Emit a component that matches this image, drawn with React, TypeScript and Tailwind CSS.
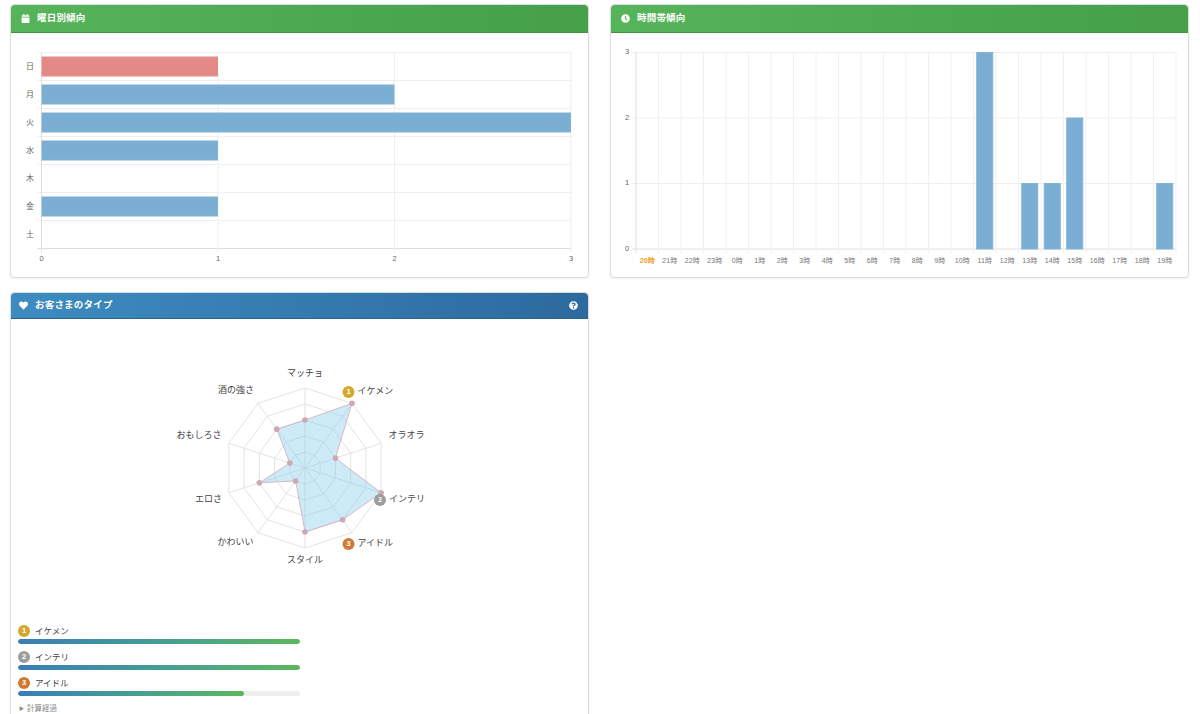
import { FaCalendar, FaClock, FaHeart, FaQuestionCircle } from "react-icons/fa";

const FONT = {
  fontFamily: '"Liberation Sans", "Noto Sans CJK JP", sans-serif',
};

const WEEKDAYS = [
  { label: "日", value: 1, sunday: true },
  { label: "月", value: 2 },
  { label: "火", value: 3 },
  { label: "水", value: 1 },
  { label: "木", value: 0 },
  { label: "金", value: 1 },
  { label: "土", value: 0 },
];

const HOURS = [20, 21, 22, 23, 0, 1, 2, 3, 4, 5, 6, 7, 8, 9, 10, 11, 12, 13, 14, 15, 16, 17, 18, 19];
const HOUR_COUNTS: Record<number, number> = { 11: 3, 13: 1, 14: 1, 15: 2, 19: 1 };

const RADAR = [
  { label: "マッチョ", value: 3 },
  { label: "イケメン", value: 5 },
  { label: "オラオラ", value: 2 },
  { label: "インテリ", value: 5 },
  { label: "アイドル", value: 4 },
  { label: "スタイル", value: 4 },
  { label: "かわいい", value: 1 },
  { label: "エロさ", value: 3 },
  { label: "おもしろさ", value: 1 },
  { label: "酒の強さ", value: 3 },
];

const RANK_COLORS = ["#d4a82a", "#9d9d9d", "#cf7a31"];

const RANKING = [
  { label: "イケメン", pct: 100 },
  { label: "インテリ", pct: 100 },
  { label: "アイドル", pct: 80 },
];

function Panel({
  title,
  icon,
  tone,
  right,
  children,
}: {
  title: string;
  icon: React.ReactNode;
  tone: "green" | "blue";
  right?: React.ReactNode;
  children: React.ReactNode;
}) {
  return (
    <div className="flex flex-col rounded-[4px] border border-[#dcdcdc] bg-white shadow-[0_1px_2px_rgba(0,0,0,0.06)]">
      <div
        className={
          tone === "green"
            ? "flex h-[28px] items-center gap-[7px] rounded-t-[4px] border-b border-[#3f963f] bg-gradient-to-r from-[#56b45a] to-[#45a049] px-[10px] text-white"
            : "flex h-[26px] items-center gap-[7px] rounded-t-[4px] border-b border-[#2a6393] bg-gradient-to-r from-[#3d8cc1] to-[#2d6a9e] px-[8px] text-white"
        }
      >
        <span className="flex w-[9px] items-center justify-center text-[9px]">{icon}</span>
        <span className="text-[9.5px] font-bold tracking-[0.2px]">{title}</span>
        {right && <span className="ml-auto flex items-center pr-[2px]">{right}</span>}
      </div>
      <div className="flex-1">{children}</div>
    </div>
  );
}

function WeekdayChart() {
  const left = 30.5;
  const right = 560;
  const top = 19.5;
  const rowH = 28;
  const unit = (right - left) / 3;
  const bottom = top + rowH * 7;

  return (
    <svg width="577" height="244" className="block" style={FONT}>
      {/* horizontal grid */}
      {Array.from({ length: 8 }).map((_, i) => (
        <line key={"h" + i} x1={left - 4} x2={right} y1={top + i * rowH} y2={top + i * rowH} stroke={i === 7 ? "#dedede" : "#efefef"} />
      ))}
      {/* vertical grid */}
      {[0, 1, 2, 3].map((v) => (
        <line key={"v" + v} x1={left + v * unit} x2={left + v * unit} y1={top} y2={bottom + 4} stroke={v === 0 ? "#dedede" : "#efefef"} />
      ))}
      {WEEKDAYS.map((d, i) => (
        <g key={d.label}>
          <text x={19} y={top + i * rowH + rowH / 2} fontSize="8" fill="#666" textAnchor="middle" dominantBaseline="middle">
            {d.label}
          </text>
          {d.value > 0 && (
            <rect
              x={left + 0.5}
              y={top + i * rowH + 4.5}
              width={d.value * unit - 1}
              height={19}
              fill={d.sunday ? "#e38a87" : "#7aafd3"}
              stroke={d.sunday ? "#e48e8b" : "#80b3d6"}
            />
          )}
        </g>
      ))}
      {[0, 1, 2, 3].map((v) => (
        <text key={"x" + v} x={left + v * unit} y={bottom + 11} fontSize="7.5" fill="#666" textAnchor="middle" dominantBaseline="middle">
          {v}
        </text>
      ))}
    </svg>
  );
}

function HourChart() {
  const left = 25;
  const right = 565;
  const top = 19.5;
  const bottom = 216;
  const unit = (bottom - top) / 3;
  const colW = (right - left) / 24;

  return (
    <svg width="577" height="244" className="block" style={FONT}>
      {[0, 1, 2, 3].map((v) => (
        <g key={"y" + v}>
          <line x1={left - 4} x2={right} y1={bottom - v * unit} y2={bottom - v * unit} stroke={v === 0 ? "#dedede" : "#efefef"} />
          <text x={16} y={bottom - v * unit} fontSize="7.5" fill="#666" textAnchor="middle" dominantBaseline="middle">
            {v}
          </text>
        </g>
      ))}
      {Array.from({ length: 25 }).map((_, i) => (
        <line key={"v" + i} x1={left + i * colW} x2={left + i * colW} y1={top} y2={bottom + 4} stroke={i === 0 ? "#dedede" : "#f0f0f0"} />
      ))}
      {HOURS.map((h, i) => {
        const count = HOUR_COUNTS[h] || 0;
        const cx = left + i * colW + colW / 2;
        return (
          <g key={h}>
            {count > 0 && (
              <rect x={cx - 8} y={bottom - count * unit} width={16} height={count * unit} fill="#7aafd3" stroke="#80b3d6" />
            )}
            <text
              x={cx}
              y={bottom + 12}
              fontSize="7"
              fill={i === 0 ? "#f0a01e" : "#777"}
              fontWeight={i === 0 ? "bold" : "normal"}
              textAnchor="middle"
              dominantBaseline="middle"
            >
              {h}時
            </text>
          </g>
        );
      })}
    </svg>
  );
}

function Badge({ rank, x, y }: { rank: number; x: number; y: number }) {
  return (
    <g>
      <circle cx={x} cy={y} r={6} fill={RANK_COLORS[rank - 1]} />
      <text x={x} y={y + 0.5} fontSize="7.5" fontWeight="bold" fill="#fff" textAnchor="middle" dominantBaseline="middle">
        {rank}
      </text>
    </g>
  );
}

function RadarChart() {
  const cx = 294;
  const cy = 149;
  const step = 16;
  const pt = (i: number, r: number) => {
    const a = (i * 36 * Math.PI) / 180;
    return [cx + r * Math.sin(a), cy - r * Math.cos(a)];
  };
  const ring = (r: number) =>
    RADAR.map((_, i) => pt(i, r).map((n) => n.toFixed(1)).join(",")).join(" ");
  const shape = RADAR.map((d, i) => pt(i, d.value * step).map((n) => n.toFixed(1)).join(",")).join(" ");

  // label anchors, ranked labels get a badge in front
  const labels: { text: string; x: number; y: number; anchor: "middle" | "start"; rank?: number }[] = [
    { text: "マッチョ", x: 294, y: 55, anchor: "middle" },
    { text: "イケメン", x: 346.5, y: 73, anchor: "start", rank: 1 },
    { text: "オラオラ", x: 395.5, y: 117, anchor: "middle" },
    { text: "インテリ", x: 378, y: 181, anchor: "start", rank: 2 },
    { text: "アイドル", x: 346.5, y: 225, anchor: "start", rank: 3 },
    { text: "スタイル", x: 294, y: 242, anchor: "middle" },
    { text: "かわいい", x: 224.5, y: 224, anchor: "middle" },
    { text: "エロさ", x: 197.5, y: 181, anchor: "middle" },
    { text: "おもしろさ", x: 188, y: 117, anchor: "middle" },
    { text: "酒の強さ", x: 225, y: 72, anchor: "middle" },
  ];

  return (
    <svg width="577" height="306" className="block" style={FONT}>
      {[1, 2, 3, 4, 5].map((n) => (
        <polygon key={n} points={ring(n * step)} fill="none" stroke="#dcdcdc" strokeWidth="0.8" />
      ))}
      {RADAR.map((_, i) => {
        const [x, y] = pt(i, 5 * step);
        return <line key={i} x1={cx} y1={cy} x2={x} y2={y} stroke="#dcdcdc" strokeWidth="0.8" />;
      })}
      <polygon points={shape} fill="rgba(135,206,235,0.42)" stroke="#d5a9b6" strokeWidth="0.8" />
      {RADAR.map((d, i) => {
        const [x, y] = pt(i, d.value * step);
        return <circle key={i} cx={x} cy={y} r={2.8} fill="#cfa8b5" />;
      })}
      {labels.map((l) => (
        <g key={l.text}>
          {l.rank && <Badge rank={l.rank} x={l.x - 9} y={l.y} />}
          <text x={l.x} y={l.y} fontSize="9" fill="#444" textAnchor={l.anchor} dominantBaseline="middle">
            {l.text}
          </text>
        </g>
      ))}
    </svg>
  );
}

function RankingList() {
  return (
    <div className="flex flex-col gap-[7px] px-[7px]">
      {RANKING.map((r, i) => (
        <div key={r.label} className="flex w-[282px] flex-col gap-[2px]">
          <div className="flex h-[12px] items-center gap-[5px]">
            <span
              className="flex h-[12px] w-[12px] items-center justify-center rounded-full text-[7.5px] font-bold text-white"
              style={{ backgroundColor: RANK_COLORS[i] }}
            >
              {i + 1}
            </span>
            <span className="text-[8.5px] text-[#444]">{r.label}</span>
          </div>
          <div className="h-[5px] w-full overflow-hidden rounded-full bg-[#eeeeee]">
            <div
              className="h-full rounded-full bg-gradient-to-r from-[#3a7db9] to-[#5cb85c]"
              style={{ width: `${r.pct}%` }}
            />
          </div>
        </div>
      ))}
      <div className="flex items-center gap-[3px] pb-[20px] pl-[1px] text-[7.5px] text-[#888]">
        <span className="text-[5px]">▶</span>
        <span>計算経過</span>
      </div>
    </div>
  );
}

export default function App() {
  return (
    <div className="min-h-screen bg-white" style={FONT}>
      <div className="grid grid-cols-2 gap-x-[21px] gap-y-[14px] pl-[10px] pr-[11px] pt-[4px]">
        <Panel title="曜日別傾向" icon={<FaCalendar />} tone="green">
          <WeekdayChart />
        </Panel>

        <Panel title="時間帯傾向" icon={<FaClock />} tone="green">
          <HourChart />
        </Panel>

        <Panel
          title="お客さまのタイプ"
          icon={<FaHeart />}
          tone="blue"
          right={<FaQuestionCircle className="text-[9px] text-white" />}
        >
          <RadarChart />
          <RankingList />
        </Panel>
      </div>
    </div>
  );
}
